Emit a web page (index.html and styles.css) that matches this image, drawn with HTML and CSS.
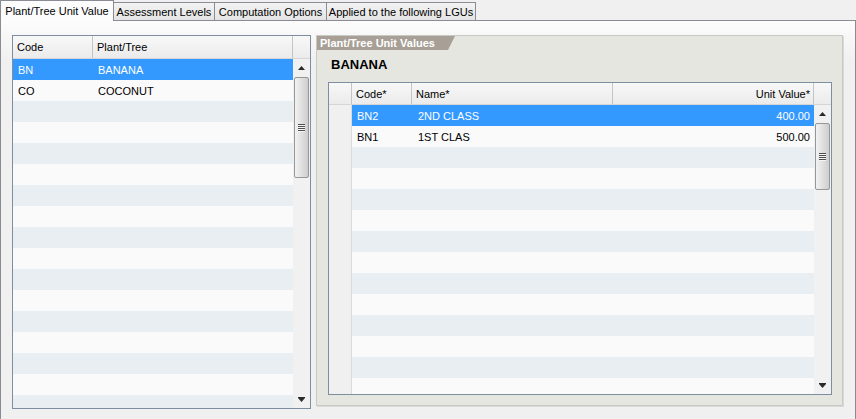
FILE: index.html
```html
<!DOCTYPE html>
<html>
<head>
<meta charset="utf-8">
<title>Plant/Tree Unit Value</title>
<link rel="stylesheet" href="styles.css">
</head>
<body>
<div class="tabs">
  <div class="tab active w1">Plant/Tree Unit Value</div>
  <div class="tab w2">Assessment Levels</div>
  <div class="tab w3">Computation Options</div>
  <div class="tab w4">Applied to the following LGUs</div>
  <div class="tab-fill"></div>
</div>
<div class="panel">
  <div class="grid grid-left">
    <div class="ghead gh-left">
      <div class="hc l-code">Code</div>
      <div class="hc l-plant">Plant/Tree</div>
      <div class="hc sbh"></div>
    </div>
    <div class="gbody">
      <div class="rows">
        <div class="row sel"><div class="cell l-code">BN</div><div class="cell l-plant">BANANA</div></div>
        <div class="row"><div class="cell l-code">CO</div><div class="cell l-plant">COCONUT</div></div>
        <div class="row"></div><div class="row"></div><div class="row"></div><div class="row"></div>
        <div class="row"></div><div class="row"></div><div class="row"></div><div class="row"></div>
        <div class="row"></div><div class="row"></div><div class="row"></div><div class="row"></div>
        <div class="row"></div><div class="row"></div><div class="row"></div>
      </div>
      <div class="vscroll">
        <div class="sb-btn"><svg width="7" height="4" viewBox="0 0 7 4"><polygon points="0,4 3.5,0 7,4" fill="#2b2b2b"/></svg></div>
        <div class="sb-track"><div class="sb-thumb thumb-left"><div class="grip"></div></div></div>
        <div class="sb-btn"><svg width="7" height="5" viewBox="0 0 7 5"><polygon points="0,0 7,0 7,1 3.5,5 0,1" fill="#2b2b2b"/></svg></div>
      </div>
    </div>
  </div>

  <div class="group">
    <div class="gtitle">Plant/Tree Unit Values</div>
    <div class="gcontent">
      <div class="gheading">BANANA</div>
      <div class="grid grid-right">
        <div class="ghead gh-right">
          <div class="hc r-rh"></div>
          <div class="hc r-code">Code*</div>
          <div class="hc r-name">Name*</div>
          <div class="hc r-val num">Unit Value*</div>
          <div class="hc sbh"></div>
        </div>
        <div class="gbody">
          <div class="rowhead"></div>
          <div class="rows">
            <div class="row sel"><div class="cell r-code">BN2</div><div class="cell r-name">2ND CLASS</div><div class="cell r-val num">400.00</div></div>
            <div class="row"><div class="cell r-code">BN1</div><div class="cell r-name">1ST CLAS</div><div class="cell r-val num">500.00</div></div>
            <div class="row"></div><div class="row"></div><div class="row"></div><div class="row"></div>
            <div class="row"></div><div class="row"></div><div class="row"></div><div class="row"></div>
            <div class="row"></div><div class="row"></div><div class="row"></div><div class="row"></div>
          </div>
          <div class="vscroll">
            <div class="sb-btn"><svg width="7" height="4" viewBox="0 0 7 4"><polygon points="0,4 3.5,0 7,4" fill="#2b2b2b"/></svg></div>
            <div class="sb-track"><div class="sb-thumb thumb-right"><div class="grip"></div></div></div>
            <div class="sb-btn"><svg width="7" height="5" viewBox="0 0 7 5"><polygon points="0,0 7,0 7,1 3.5,5 0,1" fill="#2b2b2b"/></svg></div>
          </div>
        </div>
      </div>
    </div>
  </div>
</div>
</body>
</html>
```

FILE: styles.css
```css
* { box-sizing: border-box; }

body {
  margin: 0;
  width: 856px;
  height: 419px;
  overflow: hidden;
  background: #f0f0f0;
  font: 11px "Liberation Sans", Arial, sans-serif;
  color: #000;
}

/* ---------- tabs ---------- */
.tabs {
  display: flex;
  align-items: flex-end;
  height: 21px;
}
.tab {
  height: 19px;
  line-height: 18px;
  text-align: center;
  white-space: nowrap;
  border: 1px solid #898c95;
  border-left: 0;
  background: linear-gradient(#f3f3f3, #e4e4e4);
}
.tab.active {
  height: 21px;
  line-height: 20px;
  border-left: 1px solid #898c95;
  border-bottom: 0;
  background: #fcfcfc;
}
.w1 { width: 114px; }
.w2 { width: 101px; }
.w3 { width: 112px; }
.w4 { width: 149px; }
.tab-fill {
  flex: 1;
  height: 1px;
  border-bottom: 1px solid #898c95;
}

/* ---------- panel ---------- */
.panel {
  display: flex;
  align-items: flex-start;
  gap: 5px;
  height: 400px;
  padding: 14px 0 0 11px;
  border: 1px solid #898c95;
  border-top: 0;
  background: linear-gradient(#fcfcfc, #f0f0f0 40px);
}

/* ---------- grids ---------- */
.grid {
  display: flex;
  flex-direction: column;
  border: 1px solid #7f8da1;
  background: #fafafa;
}
.grid-left { width: 299px; height: 374px; }
.grid-right { width: 504px; height: 313px; }

.ghead {
  display: flex;
  flex: none;
  border-bottom: 1px solid #d5d5d5;
  background: linear-gradient(#f8f8f8, #ebebeb);
}
.gh-left { height: 23px; }
.gh-right { height: 22px; }

.hc {
  display: flex;
  align-items: center;
  padding-left: 4px;
  border-right: 1px solid #c4c4c4;
  white-space: nowrap;
}
.hc.sbh { border-right: 0; width: 17px; }
.hc.num { justify-content: flex-end; padding-right: 3px; }

.gbody {
  display: flex;
  flex: 1;
  min-height: 0;
  overflow: hidden;
}
.rows {
  flex: 1;
  overflow: hidden;
}
.row {
  display: flex;
  height: 21px;
  background: #fafafa;
}
.row:nth-child(odd) { background: #e9eef2; }
.row.sel { background: #3399ff; color: #fff; }

.cell {
  padding-left: 5px;
  line-height: 22px;
  white-space: nowrap;
  overflow: hidden;
}
.cell.num { text-align: right; padding-right: 4px; }

.l-code { width: 80px; }
.l-plant { width: 200px; }

.r-rh { width: 23px; }
.r-code { width: 60px; }
.r-name { width: 201px; }
.r-val { width: 201px; }
.cell.r-name { padding-left: 6px; }

.rowhead {
  width: 23px;
  flex: none;
  background: #f0f0f0;
  border-right: 1px solid #dadada;
}

/* ---------- scrollbars ---------- */
.vscroll {
  width: 17px;
  flex: none;
  display: flex;
  flex-direction: column;
  background: #f1f1f1;
}
.sb-btn {
  height: 17px;
  flex: none;
  display: flex;
  align-items: center;
  justify-content: center;
}
.sb-track { flex: 1; }
.sb-thumb {
  width: 15px;
  margin: 1px 1px 0;
  border: 1px solid #979797;
  border-radius: 2px;
  background: linear-gradient(90deg, #f2f2f2, #e0e0e0 50%, #cdcdcd);
  display: flex;
  align-items: center;
  justify-content: center;
}
.thumb-left { height: 101px; }
.thumb-right { height: 67px; }
.grip {
  width: 7px;
  height: 8px;
  background: repeating-linear-gradient(#4f4f4f 0 1px, #f4f4f4 1px 2px);
}

/* ---------- group box ---------- */
.group {
  width: 527px;
  height: 371px;
  display: flex;
  flex-direction: column;
  border: 1px solid #c9c9c4;
  background: #e6e6e0;
  box-shadow: 1px 1px 0 #d9d9d9;
}
.gtitle {
  width: 138px;
  height: 14px;
  line-height: 14px;
  padding-left: 3px;
  color: #fff;
  font-weight: bold;
  white-space: nowrap;
  background: #a89f96;
  clip-path: polygon(0 0, 100% 0, calc(100% - 7px) 100%, 0 100%);
}
.gcontent {
  padding: 0 10px 10px 11px;
}
.gheading {
  font-weight: bold;
  font-size: 13px;
  line-height: 16px;
  padding: 7px 0 9px 3px;
}
```
